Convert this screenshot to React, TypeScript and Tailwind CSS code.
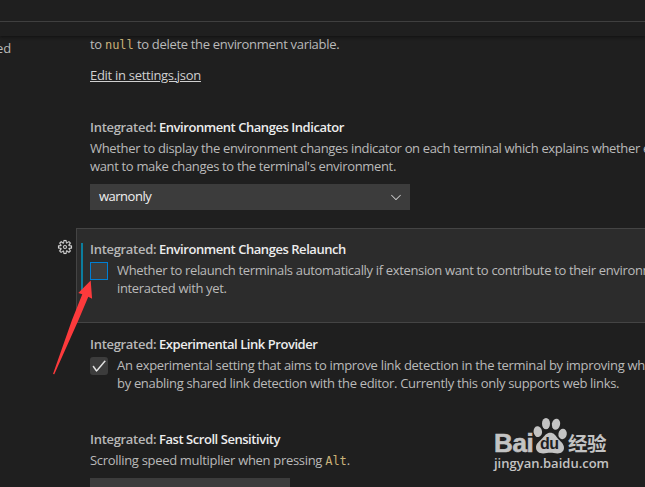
import React from 'react';
import { VscCheck, VscChevronDown, VscGear } from 'react-icons/vsc';

const SettingTitle: React.FC<{ name: string }> = ({ name }) => (
  <h3 className="flex h-[18px] gap-[3px] text-[13px] font-semibold leading-[18px]">
    <span className="w-[66px] tracking-[-0.3px] text-[#b8b8b8]">Integrated:</span>
    <span className="tracking-[-0.45px] text-[#ededed]">{name}</span>
  </h3>
);

interface LineProps {
  children: React.ReactNode;
  className?: string;
}

const Line: React.FC<LineProps> = ({ children, className = 'tracking-[-0.34px]' }) => (
  <span className={`block h-[18px] leading-[18px] ${className}`}>{children}</span>
);

const Code: React.FC<{ children: React.ReactNode }> = ({ children }) => (
  <code className="font-['DejaVu_Sans_Mono',monospace] text-[12px] tracking-[0px] text-[#cbb277]">{children}</code>
);

const Arrow = () => (
  <svg className="pointer-events-none absolute left-0 top-0" width="120" height="400" fill="#fd3a3c">
    <path d="M90.7 280.5 78.3 293l4 1.3L72 320 53 374l1.3.3L78.5 320l9.8-23.3 3.8 2z" />
  </svg>
);

const Watermark = () => (
  <div className="absolute left-[494px] top-[417px] w-[116px] text-[#c3c3c3]">
    <div className="flex h-[37px]">
      <span className="mt-[14px] h-[23px] w-[39px] font-['Liberation_Sans',sans-serif] text-[26px] font-bold leading-[25px] tracking-[-0.4px] [-webkit-text-stroke:0.6px_#c3c3c3]">
        Bai
      </span>
      <div className="relative h-[37px] w-[35px]">
        <svg width="35" height="37" viewBox="0 0 35 37" fill="currentColor">
          <ellipse cx="4.8" cy="14.7" rx="4.2" ry="5.4" transform="rotate(-8 4.8 14.7)" />
          <ellipse cx="13" cy="6.6" rx="4" ry="5.7" />
          <ellipse cx="23" cy="7.2" rx="4.1" ry="5.6" transform="rotate(12 23 7.2)" />
          <ellipse cx="29.6" cy="17" rx="4.2" ry="5.3" transform="rotate(8 29.6 17)" />
          <path d="M17.2 15.7c3.5 0 5 2.2 7 5 2.4 3.3 7 5.5 6.8 10.3-.2 3.8-3.2 5.5-6.5 5.4-3-.1-4.5-.6-7.3-.6s-4.5.7-7.3.6c-3.5 0-6.7-1.6-6.9-5.6-.2-4.4 3.7-6.5 6.8-10 2.2-2.7 4-5.1 7.4-5.1z" />
        </svg>
        <span className="absolute left-[7px] top-[18px] font-['Liberation_Sans',sans-serif] text-[16px] font-bold leading-[18px] tracking-[-0.6px] text-[#202020]">
          du
        </span>
      </div>
      <span className="mt-[17px] h-[18px] font-['Noto_Sans_CJK_SC',sans-serif] text-[19.5px] font-bold leading-[18px] tracking-[-0.6px]">
        经验
      </span>
    </div>
    <p className="mt-px whitespace-nowrap font-['Open_Sans',sans-serif] text-[13px] font-semibold leading-[17px]">
      jingyan.baidu.com
    </p>
  </div>
);

export default function App() {
  return (
    <div className="relative flex h-[487px] w-[645px] flex-col overflow-hidden whitespace-nowrap bg-[#1f1f1f] font-['Open_Sans',sans-serif] text-[13px] text-[#bababa]">
      <header className="z-10 h-9 shrink-0 bg-[#1f1f1f] shadow-[0_1px_3px_#101010]">
        <div className="h-[22px] border-b border-[#3f3f3f]" />
      </header>

      <div className="flex min-h-0 flex-1">
        <nav className="flex w-[76px] shrink-0 overflow-hidden">
          <span className="-ml-[4px] mt-[3px] leading-[18px]">ed</span>
        </nav>

        <main className="min-w-0 flex-1">
          <section className="h-[71px] pl-[14px]">
            <Line className="-mt-px tracking-[-0.31px]">
              to <Code>null</Code> to delete the environment variable.
            </Line>
            <a className="mt-[13px] block w-fit leading-[18px] tracking-[-0.29px] text-[#d0d0d0] underline underline-offset-1">
              Edit in settings.json
            </a>
          </section>

          <section className="h-[122px] pl-[14px] pt-[12px]">
            <SettingTitle name="Environment Changes Indicator" />
            <p className="mt-[3px]">
              <Line>Whether to display the environment changes indicator on each terminal which explains whether extensions</Line>
              <Line>want to make changes to the terminal's environment.</Line>
            </p>
            <button className="mt-[9px] flex h-[26px] w-[320px] items-center justify-between bg-[#3c3c3c] pl-[9px] pr-[6px] text-[#f0f0f0]">
              <span className="tracking-[-0.5px]">warnonly</span>
              <VscChevronDown className="size-4 text-[#d0d0d0]" />
            </button>
          </section>

          <section className="relative h-[95px] border-y border-l border-[#444444] bg-[#2c2c2c] pl-[13px] pt-[11px]">
            <VscGear className="absolute left-[-20px] top-[10px] size-4 text-[#d0d0d0]" strokeWidth="0.15" />
            <div className="absolute left-[4px] top-[14px] h-[48px] w-[2px] bg-[#0c7d9d]" />
            <SettingTitle name="Environment Changes Relaunch" />
            <div className="mt-[3px] flex gap-[9px]">
              <span className="mt-px size-[18px] shrink-0 border border-[#007fd4] bg-[#3c3c3c]" />
              <p>
                <Line>Whether to relaunch terminals automatically if extension want to contribute to their environment and have not been</Line>
                <Line>interacted with yet.</Line>
              </p>
            </div>
          </section>

          <section className="h-[95px] pl-[14px] pt-[12px]">
            <SettingTitle name="Experimental Link Provider" />
            <div className="mt-[3px] flex gap-[9px]">
              <span className="mt-px flex size-[18px] shrink-0 items-center justify-center rounded-[3px] bg-[#3c3c3c]">
                <VscCheck className="size-4 text-[#f5f5f5]" strokeWidth="0.5" />
              </span>
              <p>
                <Line className="tracking-[-0.3px]">
                  An experimental setting that aims to improve link detection in the terminal by improving when links are detected and
                </Line>
                <Line className="tracking-[-0.32px]">
                  by enabling shared link detection with the editor. Currently this only supports web links.
                </Line>
              </p>
            </div>
          </section>

          <section className="pl-[14px] pt-[12px]">
            <SettingTitle name="Fast Scroll Sensitivity" />
            <Line className="mt-[3px] tracking-[-0.31px]">
              Scrolling speed multiplier when pressing <Code>Alt</Code>.
            </Line>
            <div className="mt-[9px] h-[26px] w-[200px] bg-[#3c3c3c]" />
          </section>
        </main>
      </div>

      <Arrow />
      <Watermark />
    </div>
  );
}
